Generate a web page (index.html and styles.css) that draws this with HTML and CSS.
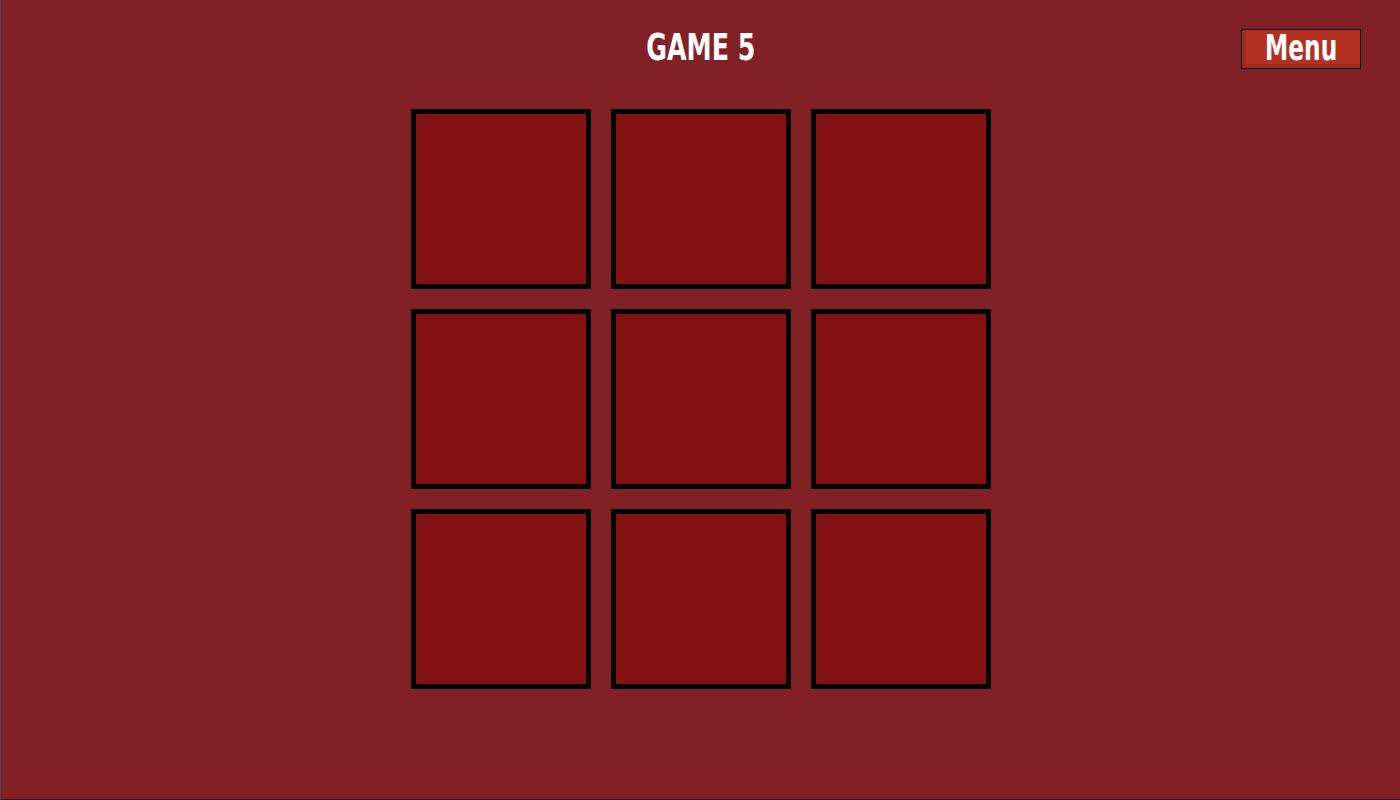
FILE: index.html
```html
<!DOCTYPE html>
<html lang="en">
<head>
<meta charset="utf-8">
<title>Game 5</title>
<link rel="stylesheet" href="styles.css">
</head>
<body>
  <div class="page">
    <header class="header">
      <div class="spacer"></div>
      <h1 class="title"><span class="narrow">GAME 5</span></h1>
      <button class="menu-btn" type="button"><span class="narrow">Menu</span></button>
    </header>
    <main class="board">
      <div class="tile"></div>
      <div class="tile"></div>
      <div class="tile"></div>
      <div class="tile"></div>
      <div class="tile"></div>
      <div class="tile"></div>
      <div class="tile"></div>
      <div class="tile"></div>
      <div class="tile"></div>
    </main>
  </div>
</body>
</html>
```
FILE: styles.css
```css
html, body {
  margin: 0;
  padding: 0;
  height: 100%;
}

body {
  background: #822125;
  font-family: "DejaVu Sans Condensed", "DejaVu Sans", sans-serif;
}

.page {
  box-sizing: border-box;
  height: 800px;
  border-left: 1px solid #4a4a4a;
  border-bottom: 1px solid #2a1010;
  display: flex;
  flex-direction: column;
}

.header {
  display: grid;
  grid-template-columns: 1fr auto 1fr;
  align-items: start;
  padding: 29px 39px 0 39px;
  height: 40px;
}

.narrow {
  display: inline-block;
  transform: scaleX(0.74);
}

.title {
  margin: 0;
  color: #ffffff;
  font-size: 38px;
  font-weight: bold;
  line-height: 36px;
  text-align: center;
  white-space: nowrap;
}

.menu-btn {
  justify-self: end;
  box-sizing: border-box;
  width: 120px;
  height: 40px;
  margin: 0;
  padding: 0 0 2px 0;
  background: #b23121;
  border: 1.5px solid #000000;
  box-shadow: inset 4px -4px 0 #a12a1f;
  color: #ffffff;
  font-family: inherit;
  font-size: 36px;
  font-weight: bold;
  line-height: 36px;
  cursor: pointer;
}

.menu-btn .narrow {
  transform: scaleX(0.72);
}

.board {
  display: grid;
  grid-template-columns: repeat(3, 180px);
  grid-auto-rows: 180px;
  gap: 20px;
  justify-content: center;
  margin-top: 40px;
}

.tile {
  box-sizing: border-box;
  background: #841212;
  border: 5px solid #000000;
}
```
